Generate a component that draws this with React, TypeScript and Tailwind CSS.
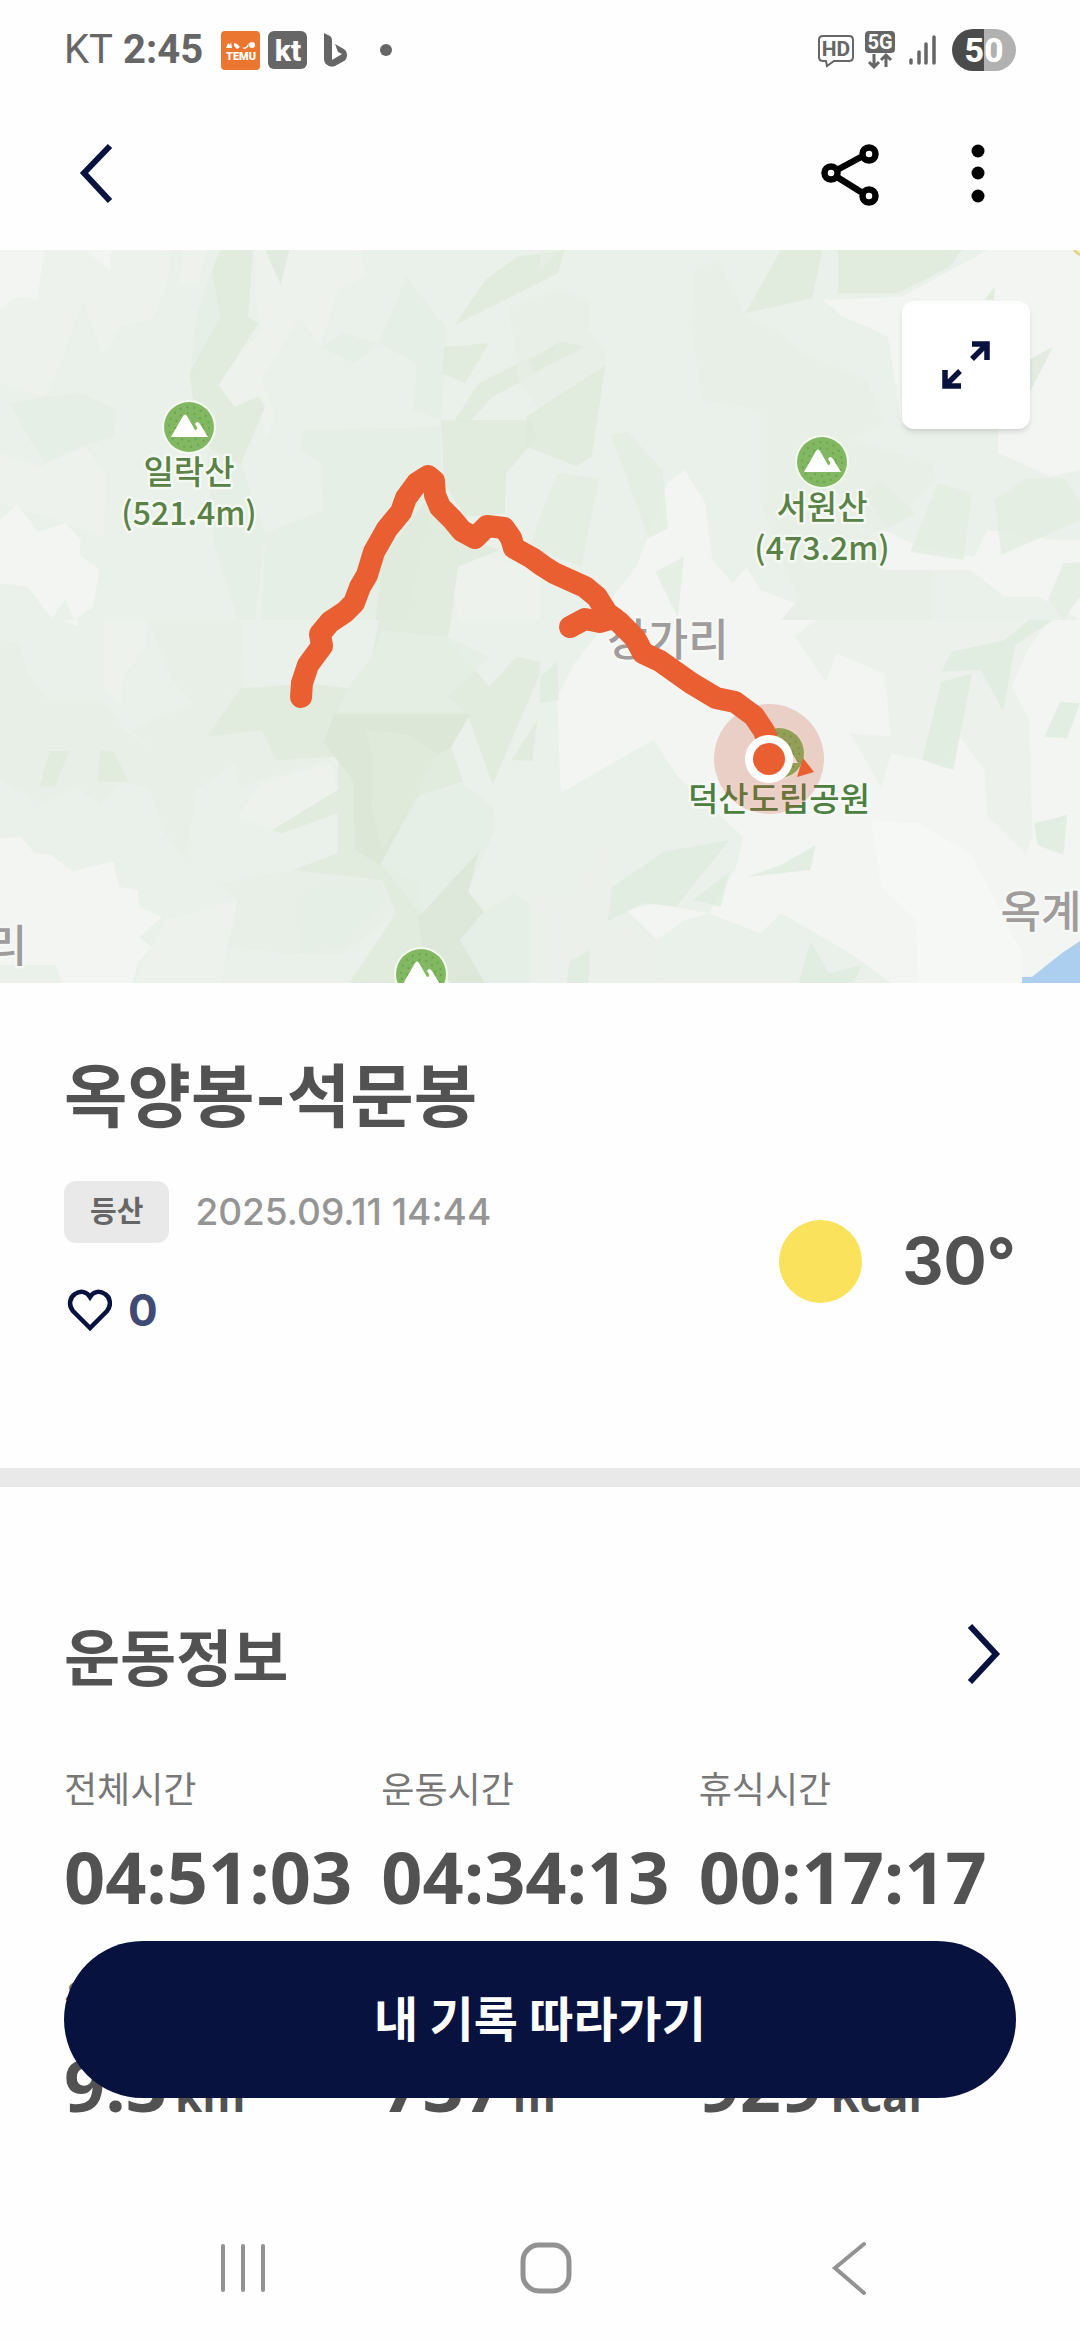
import { useState } from 'react';

interface Shape {
  fill: string;
  points: string[];
}

interface Tile {
  id: string;
  x: number;
  y: number;
  shapes: Shape[];
}

interface Stat {
  label: string;
  value: string;
  unit?: string;
}

// terrain tiles, each one drawn on its own 1568 x 1110 grid
const tiles: Tile[] = [
  {
    id: 'nw',
    x: 0,
    y: 0,
    shapes: [
      {
        fill: '#edf2ed',
        points: [
          '130,0 500,0 480,120 440,210 350,230 300,320 240,150 180,330 130,440 0,400 0,180 50,140 110,150',
          '530,0 600,0 575,100 520,105',
          '740,0 1050,0 1060,80 980,120 930,290 870,200 760,390 800,500 770,570 750,440 680,470 630,400 760,240 740,130',
          '1350,900 1568,960 1568,1110 1330,1110 1310,960',
          '0,610 120,650 250,590 310,680 300,860 190,820 0,760',
        ],
      },
      {
        fill: '#e5eee4',
        points: [
          '30,460 130,440 240,430 340,480 330,560 230,590 130,640 80,560',
          '880,540 1280,530 1280,640 1180,1110 760,1110 770,850 940,780 930,640 870,600',
          '930,290 1000,250 1100,280 1030,340',
          '1180,80 1300,240 1280,510 1200,480 1210,340 1100,280',
          '570,200 615,60 640,200 550,400',
          '600,600 700,640 770,850 740,1110 690,1110 620,880',
        ],
      },
      {
        fill: '#dfeadc',
        points: [
          '640,0 735,0 720,200 750,220 635,405 680,470 750,440 770,470 700,640 610,600 565,480 550,370 640,200 615,60',
          '770,0 840,0 815,105',
          '1640,0 1620,70 1320,225 1410,90 1500,20',
          '1290,290 1420,280 1350,400 1285,370',
          '1620,280 1568,365 1430,440 1360,520 1320,510 1390,400',
          '1280,510 1545,510 1560,560 1470,670 1465,790 1350,800 1290,700',
          '1230,760 1310,850 1450,900 1330,950 1310,1110 1090,1110 1110,930',
        ],
      },
      {
        fill: '#f3f6f3',
        points: [
          '0,0 130,0 108,150 50,140 0,180',
          '250,0 320,0 322,65',
          '0,810 50,765 110,845 190,820 235,870 230,915 290,960 270,1070 215,1110 190,1050 150,1105 80,1010 0,1000',
        ],
      },
    ],
  },
  {
    id: 'ne',
    x: 540,
    y: 0,
    shapes: [
      {
        fill: '#e6efe5',
        points: [
          '0,0 60,0 0,60',
          '-90,170 60,120 150,160 140,240 190,300 190,345 0,480 -60,400',
          '450,60 520,30 600,200 700,250 760,310 950,390 1000,520 900,570 1140,640 1150,690 1000,840 900,830 1140,960 1140,1110 650,1110 750,1050 640,760 640,480 470,450 440,230',
        ],
      },
      {
        fill: '#f3f6f3',
        points: [
          '820,150 1050,140 1300,0 1568,0 1568,660 1480,680 1400,640 1330,610 1330,540 1050,520 1010,260 950,230 880,200',
          '370,700 420,660 480,760 500,930 560,1000 600,950 640,1020 740,1060 700,1110 250,1110 180,1080 280,950',
          '1000,840 1100,890 1260,920 1300,840 1500,870 1568,870 1568,1110 1450,1040 1350,1040 1250,960 1000,960',
        ],
      },
      {
        fill: '#dfeadc',
        points: [
          '700,0 820,0 790,145 595,190',
          '865,0 1225,0 1190,50 1040,130 865,130',
          '-40,500 190,345 150,620 105,648 -40,590',
          '-30,330 60,275 130,290 -20,370',
          '1490,290 1400,470 1400,340',
          '1290,150 1320,110 1318,150',
        ],
      },
      {
        fill: '#e3ede2',
        points: [
          '205,555 255,545 355,660 372,835 315,865',
          '50,670 172,685 120,950 -30,890 0,800',
          '335,965 418,920 400,1100',
          '945,740 985,685 1090,790 1010,835',
          '1155,700 1255,730 1230,930 1075,905',
          '1410,685 1520,685 1568,750 1568,810 1340,915 1320,750',
          '1520,940 1568,935 1568,1040 1520,1110 1475,1050',
        ],
      },
    ],
  },
  {
    id: 'sw',
    x: 0,
    y: 370,
    shapes: [
      {
        fill: '#e6efe5',
        points: [
          '0,60 60,70 80,160 140,240 300,240 360,330 460,400 570,510 540,720 480,640 430,500 350,490 290,555 220,500 120,550 0,480',
          '380,330 560,250 700,205 800,420 970,410 700,500 680,430 570,510 460,400',
          '640,790 850,750 1110,780 1150,880 1000,1000 820,1000 660,980 690,840',
          '430,0 700,0 710,200 560,250 500,180',
        ],
      },
      {
        fill: '#edf2ed',
        points: [
          '300,0 430,0 420,80 360,170 350,260 300,200',
          '690,590 760,490 960,430 980,510 790,630',
          '480,900 690,840 660,980 640,1110 380,1110',
        ],
      },
      {
        fill: '#dfeadc',
        points: [
          '700,205 900,190 1010,205 1080,110 1100,0 1310,0 1300,50 1420,200 1500,110 1568,125 1568,160 1430,495 1360,290 1310,380 1345,485 1220,525 1105,730 1220,790 1230,1110 1000,1110 1150,880 1110,780 850,750 980,700 980,410 800,420 760,330 600,350',
          '145,393 200,393 160,500 115,498',
          '290,390 330,395 372,485 285,485',
          '790,630 980,510 980,580 820,640',
          '1485,420 1560,300 1545,422',
        ],
      },
      {
        fill: '#e5eee4',
        points: [
          '1105,730 1220,525 1345,490 1430,560 1440,620 1360,810 1390,700 1220,880',
          '1405,875 1490,820 1600,900 1590,1110 1420,1110 1335,960',
          '1080,110 1110,30 1300,50 1420,110 1300,230 1350,275 980,275 1010,205',
          '860,840 920,785 1110,785 1115,850 1000,980 870,1000',
        ],
      },
      {
        fill: '#dae6d7',
        points: [
          '970,283 1365,283 1310,380 1260,410 1190,560 1105,735 1030,690 1025,480 940,370',
          '1390,695 1360,815 1405,875 1335,960 1420,1110 1330,1110 1230,1010 1215,890',
        ],
      },
      {
        fill: '#dfeadc',
        points: ['1060,330 1180,340 1270,400 1190,560 1110,690 1080,560 1085,410'],
      },
      {
        fill: '#f3f6f3',
        points: [
          '0,655 60,650 100,700 150,705 210,755 260,740 330,725 345,800 400,810 405,860 470,890 405,950 440,980 400,1030 380,1110 190,1110 160,1035 0,1035',
          '180,0 225,0 228,20',
        ],
      },
    ],
  },
  {
    id: 'se',
    x: 540,
    y: 370,
    shapes: [
      {
        fill: '#f3f6f3',
        points: [
          '200,0 1568,0 1568,1110 1050,1110 900,1000 700,880 640,940 490,880 570,740 590,650 400,470 330,360 210,430 60,520 50,230 100,130',
          '250,870 330,850 490,880 420,900 340,960',
        ],
      },
      {
        fill: '#f6f8f6',
        points: ['960,600 1100,610 1250,700 1310,820 1400,1000 1400,1110 1100,1110 1090,900 990,800'],
      },
      {
        fill: '#ebf1ea',
        points: [
          '740,50 800,0 1480,0 1420,80 1370,200 1420,300 1430,650 1410,700 1300,590 1290,450 1220,350 1160,430 1020,400 990,500 900,340 1020,350 1000,160 860,100 830,185',
          '-30,830 100,820 200,640 210,800 195,905 350,960 340,1110 -30,1110',
        ],
      },
      {
        fill: '#e1ecdf',
        points: [
          '1195,95 1350,60 1420,0 1490,0 1380,75 1345,275 1280,150 1165,155',
          '1165,185 1255,160 1200,450 1110,420',
          '1510,245 1568,250 1530,355 1465,350',
          '1435,610 1530,585 1520,705 1445,675',
          '0,170 50,125 55,240 0,250',
          '210,800 360,695 550,660 395,860 300,850 195,905',
          '445,840 550,755 525,860',
          '605,770 700,735 800,675 785,750',
          '85,1025 145,990 140,1110 75,1110',
          '745,1110 785,965 840,1060 935,1035 900,1110',
        ],
      },
    ],
  },
];

const peaks = [
  { name: '일락산', height: '(521.4m)', x: 189, y: 177 },
  { name: '서원산', height: '(473.2m)', x: 822, y: 212 },
];

const route =
  'M301 447 L302 433 L308 415 L322 396 L320 384 L330 372 L345 362 L354 353 L360 337 L367 325 L374 302 L387 279 L401 262 L406 248 L417 233 L428 226 L434 231 L435 245 L440 257 L452 269 L462 281 L475 288 L487 276 L504 278 L511 288 L514 298 L532 308 L543 316 L554 323 L585 337 L597 347 L607 363 L619 372 L635 388 L643 403 L660 411 L691 433 L716 448 L735 452 L754 466 L764 481 L769 495';

const routeBranch = 'M570 377 L585 369 L600 372 L614 368';

const stats: Stat[] = [
  { label: '전체시간', value: '04:51:03' },
  { label: '운동시간', value: '04:34:13' },
  { label: '휴식시간', value: '00:17:17' },
  { label: '운동거리', value: '9.3', unit: 'km' },
  { label: '최고고도', value: '737', unit: 'm' },
  { label: '칼로리', value: '929', unit: 'Kcal' },
];

function PeakIcon({ x, y }: { x: number; y: number }) {
  return (
    <g transform={`translate(${x} ${y})`}>
      <circle r="27" fill="#f4faf0" />
      <circle r="25" fill="#83b863" />
      <circle r="20" fill="none" stroke="#6fa351" strokeWidth="2" strokeDasharray="2 5" />
      <circle r="14" fill="none" stroke="#6fa351" strokeWidth="2" strokeDasharray="2 5" />
      <path d="M-18 10 L-6 -11 Q-4 -14 -2 -11 L6 3 Q9 3 8 0 L6 -3 Q8 -7 11 -3 L19 10 Z" fill="#fff" />
    </g>
  );
}

function StatusBar() {
  return (
    <div className="flex h-[100px] items-center justify-between px-16 font-['Roboto','Noto_Sans_CJK_KR',sans-serif] text-[#666]">
      <div className="flex items-center">
        <span className="text-[40px]">KT</span>
        <span className="ml-[10px] text-[40px] font-bold">2:45</span>
        <svg className="ml-[18px] h-10 w-10" viewBox="0 0 40 40">
          <rect width="39" height="39" y="1" rx="4" fill="#ea762f" />
          <path d="M5 18 l2-5 2 2 1-3 1 6z M13 13 l3 1 3 3 -3 2 -3-3z M21 18 l4-1 3-4 -1 4 -3 2z" fill="#fff" />
          <circle cx="31" cy="15" r="3" fill="#fff" />
          <text x="20" y="30" textAnchor="middle" fontSize="11" fontWeight="900" fill="#fff">TEMU</text>
        </svg>
        <svg className="ml-[7px] h-10 w-10" viewBox="0 0 40 40">
          <rect width="39" height="38" y="1" rx="6" fill="#666" />
          <text x="20" y="31" textAnchor="middle" fontSize="30" fontWeight="800" fill="#fff">kt</text>
        </svg>
        <svg className="ml-4 h-9 w-6" viewBox="0 0 24 36" fill="#666">
          <path d="M0 1 L6 4 Q8 5 8 8 L8 27 L11 33 Q8 35 5 34 Q0 32 0 27 Z" />
          <path d="M11 12 L18 16 Q23 18 23 23 Q23 27 20 29 L11 34 Q8 35 6 34 L3 31 L18 22 L14 20 Z" />
        </svg>
        <span className="ml-8 h-3 w-3 rounded-full bg-[#666]" />
      </div>
      <div className="flex items-center">
        <svg className="h-9 w-9" viewBox="0 0 36 36" fill="none">
          <path d="M5 4 H31 Q35 4 35 8 V25 Q35 29 31 29 H16 L9 34 L8 29 H5 Q1 29 1 25 V8 Q1 4 5 4 Z" stroke="#666" strokeWidth="2" />
          <text x="18" y="24" textAnchor="middle" fontSize="21" fontWeight="700" fill="#666">HD</text>
        </svg>
        <svg className="ml-[10px] h-[38px] w-8" viewBox="0 0 32 38" fill="none">
          <rect x="1" width="30" height="22" rx="4" fill="#666" />
          <text x="16" y="18" textAnchor="middle" fontSize="20" fontWeight="700" fill="#fff">5G</text>
          <path d="M10 23 V36 M5 31 L10 36 L15 31 M22 36 V24 M17 29 L22 24 L27 29" stroke="#666" strokeWidth="3" />
        </svg>
        <svg className="ml-3 h-[30px] w-7" viewBox="0 0 28 30" stroke="#666" strokeWidth="3.5" strokeLinecap="round">
          <path d="M3 25 V28 M11 17 V28 M18 9 V28 M26 2 V28" />
        </svg>
        <div className="ml-4 flex h-[42px] w-16 items-center justify-center rounded-full bg-linear-to-r from-[#4b4b4b] from-50% to-[#b1b1b1] to-50% text-[34px] font-extrabold text-white">
          50
        </div>
      </div>
    </div>
  );
}

function AppHeader() {
  return (
    <header className="flex h-[150px] items-start justify-between pt-10 pr-[72px] pl-16">
      <button aria-label="뒤로" className="h-16 w-16">
        <svg className="h-16 w-16" viewBox="0 0 64 64" fill="none" stroke="#07123f" strokeWidth="6">
          <path d="M46 6 L20 33 L46 61" />
        </svg>
      </button>
      <div className="flex gap-[63px]">
        <button aria-label="공유" className="h-16 w-16">
          <svg className="h-16 w-16 overflow-visible" viewBox="0 0 64 64" fill="none" stroke="#000" strokeWidth="6.5">
            <path d="M20 30 L44 17 M20 37 L44 52" />
            <circle cx="14" cy="33" r="6.5" />
            <circle cx="52" cy="14" r="6.5" />
            <circle cx="52" cy="56" r="6.5" />
          </svg>
        </button>
        <button aria-label="더보기" className="h-16 w-16">
          <svg className="h-16 w-16" viewBox="0 0 64 64" fill="#000">
            <circle cx="34" cy="11" r="6.5" />
            <circle cx="34" cy="33" r="6.5" />
            <circle cx="34" cy="56" r="6.5" />
          </svg>
        </button>
      </div>
    </header>
  );
}

function RouteMap() {
  return (
    <section className="relative h-[733px] overflow-hidden bg-[#eaf1ea]">
      <svg
        className="h-full w-full font-['Noto_Sans_CJK_KR',sans-serif]"
        viewBox="0 0 1080 733"
        preserveAspectRatio="xMidYMid slice"
      >
        {tiles.map(tile => (
          <g key={tile.id} transform={`translate(${tile.x} ${tile.y}) scale(0.3444 0.3333)`}>
            {tile.shapes.map((shape, i) => (
              <g key={i} fill={shape.fill} fillOpacity="0.85">
                {shape.points.map(p => <polygon key={p} points={p} />)}
              </g>
            ))}
          </g>
        ))}
        <path d="M1022 727 H1032 L1062 703 L1080 691 V733 H1022 Z" fill="#adcfef" />
        <path d="M1074 0 L1080 5" stroke="#e6d48a" strokeWidth="3" />

        <g fontSize="44" fontWeight="500" fill="#a09c9c" stroke="#f6f8f6" strokeWidth="5" strokeLinejoin="round" textAnchor="middle" paintOrder="stroke">
          <text x="668" y="406">장가리</text>
          <text x="1041" y="678">옥계</text>
          <text x="7" y="712">리</text>
        </g>

        {peaks.map(peak => (
          <g key={peak.name}>
            <PeakIcon x={peak.x} y={peak.y} />
            <g fontWeight="500" fill="#5a8246" stroke="#f4f8f2" strokeWidth="5" strokeLinejoin="round" textAnchor="middle" paintOrder="stroke">
              <text x={peak.x} y={peak.y + 57} fontSize="33">{peak.name}</text>
              <text x={peak.x} y={peak.y + 98} fontSize="32">{peak.height}</text>
            </g>
          </g>
        ))}
        <PeakIcon x={421} y={724} />
        <PeakIcon x={779} y={503} />
        <text x="779" y="561" fontSize="33" fontWeight="500" fill="#4c8040" stroke="#f6f8f6" strokeWidth="5" strokeLinejoin="round" textAnchor="middle" paintOrder="stroke">
          덕산도립공원
        </text>

        <circle cx="769" cy="509" r="55" fill="#cf4a2e" fillOpacity="0.22" />
        <g fill="none" stroke="#ea5f31" strokeWidth="22" strokeLinecap="round" strokeLinejoin="round">
          <path d={route} />
          <path d={routeBranch} />
        </g>
        <path d="M797 527 L803 508 L814 522 Z" fill="#ea5f31" />
        <circle cx="769" cy="509" r="24" fill="#fff" />
        <circle cx="769" cy="509" r="16" fill="#ea5f31" />
      </svg>
      <button
        aria-label="지도 확대"
        className="absolute top-[51px] right-[50px] flex h-32 w-32 items-center justify-center rounded-xl bg-white shadow-md"
      >
        <svg className="h-12 w-12" viewBox="0 0 48 48" fill="none" stroke="#07123f" strokeWidth="5.5">
          <path d="M30 3 H45 V19 M45 3 L30 18 M3 29 V45 H19 M3 45 L18 30" />
        </svg>
      </button>
    </section>
  );
}

export default function App() {
  const [liked, setLiked] = useState(false);

  return (
    <div className="flex min-h-screen flex-col bg-[#fefefe] font-['Inter','Noto_Sans_CJK_KR',sans-serif] text-[#525252]">
      <StatusBar />
      <AppHeader />
      <RouteMap />

      <section className="flex h-[485px] flex-col px-16 pt-16">
        <h1 className="text-[69px] leading-[100px] font-bold">옥양봉-석문봉</h1>
        <div className="flex items-center justify-between pt-[34px]">
          <div>
            <div className="flex h-[62px] items-center gap-[26px]">
              <span className="flex h-full items-center rounded-xl bg-[#e9e9e9] px-[26px] text-[29px] font-bold text-[#666]">
                등산
              </span>
              <time className="text-[37px] font-medium text-[#959595]">2025.09.11 14:44</time>
            </div>
            <button
              onClick={() => setLiked(!liked)}
              className="mt-9 flex items-center gap-4 text-[44px] leading-[62px] font-bold text-[#3f4a75]"
            >
              <svg className="h-12 w-12" viewBox="0 0 48 48" fill={liked ? '#07123f' : 'none'} stroke="#07123f" strokeWidth="4.5">
                <path d="M26 42 L9 25 C4 19 6 11 11 8 C17 4 23 6 26 11 C29 6 35 4 41 8 C46 11 48 19 43 25 Z" />
              </svg>
              {liked ? 1 : 0}
            </button>
          </div>
          <div className="flex items-center gap-10">
            <span className="h-[83px] w-[83px] rounded-full bg-[#fae25c]" />
            <span className="text-[64px] leading-none font-bold">30°</span>
          </div>
        </div>
      </section>

      <div className="h-[19px] bg-[#e9e9e9]" />

      <section className="px-16 pt-32">
        <div className="flex items-center justify-between">
          <h2 className="text-[61px] leading-[88px] font-bold">운동정보</h2>
          <button aria-label="운동정보 더보기" className="h-16 w-16">
            <svg className="h-16 w-16 overflow-visible" viewBox="0 0 64 64" fill="none" stroke="#07123f" strokeWidth="6">
              <path d="M18 -1 L44 27 L18 55" />
            </svg>
          </button>
        </div>
        <dl className="grid grid-cols-3 gap-y-10 pt-[61px]">
          {stats.map(stat => (
            <div key={stat.label}>
              <dt className="text-[36px] leading-[52px] text-[#777]">{stat.label}</dt>
              <dd className="flex items-baseline gap-2 pt-1 font-['Open_Sans',sans-serif] text-[72px] leading-[112px] font-bold">
                {stat.value}
                {stat.unit && <span className="text-[44px] leading-none">{stat.unit}</span>}
              </dd>
            </div>
          ))}
        </dl>
      </section>

      <button className="fixed inset-x-16 bottom-[242px] h-[157px] rounded-full bg-[#07123f] text-[48px] font-bold text-white">
        내 기록 따라가기
      </button>

      <nav className="sticky bottom-0 mt-auto grid h-36 grid-cols-3 items-center bg-[#fefefe] pr-20 pl-[92px]">
        <button aria-label="최근 앱" className="flex justify-center">
          <svg className="h-14 w-14" viewBox="0 0 56 56" stroke="#929292" strokeWidth="4" strokeLinecap="round">
            <path d="M8 6 V50 M28 6 V50 M48 6 V50" />
          </svg>
        </button>
        <button aria-label="홈" className="flex justify-center">
          <svg className="h-14 w-14" viewBox="0 0 56 56" fill="none" stroke="#929292" strokeWidth="5">
            <rect x="5" y="5" width="46" height="46" rx="16" />
          </svg>
        </button>
        <button aria-label="이전" className="flex justify-center">
          <svg className="h-14 w-14" viewBox="0 0 56 56" fill="none" stroke="#929292" strokeWidth="4" strokeLinecap="round">
            <path d="M43 4 L14 28 L43 53" />
          </svg>
        </button>
      </nav>
    </div>
  );
}
